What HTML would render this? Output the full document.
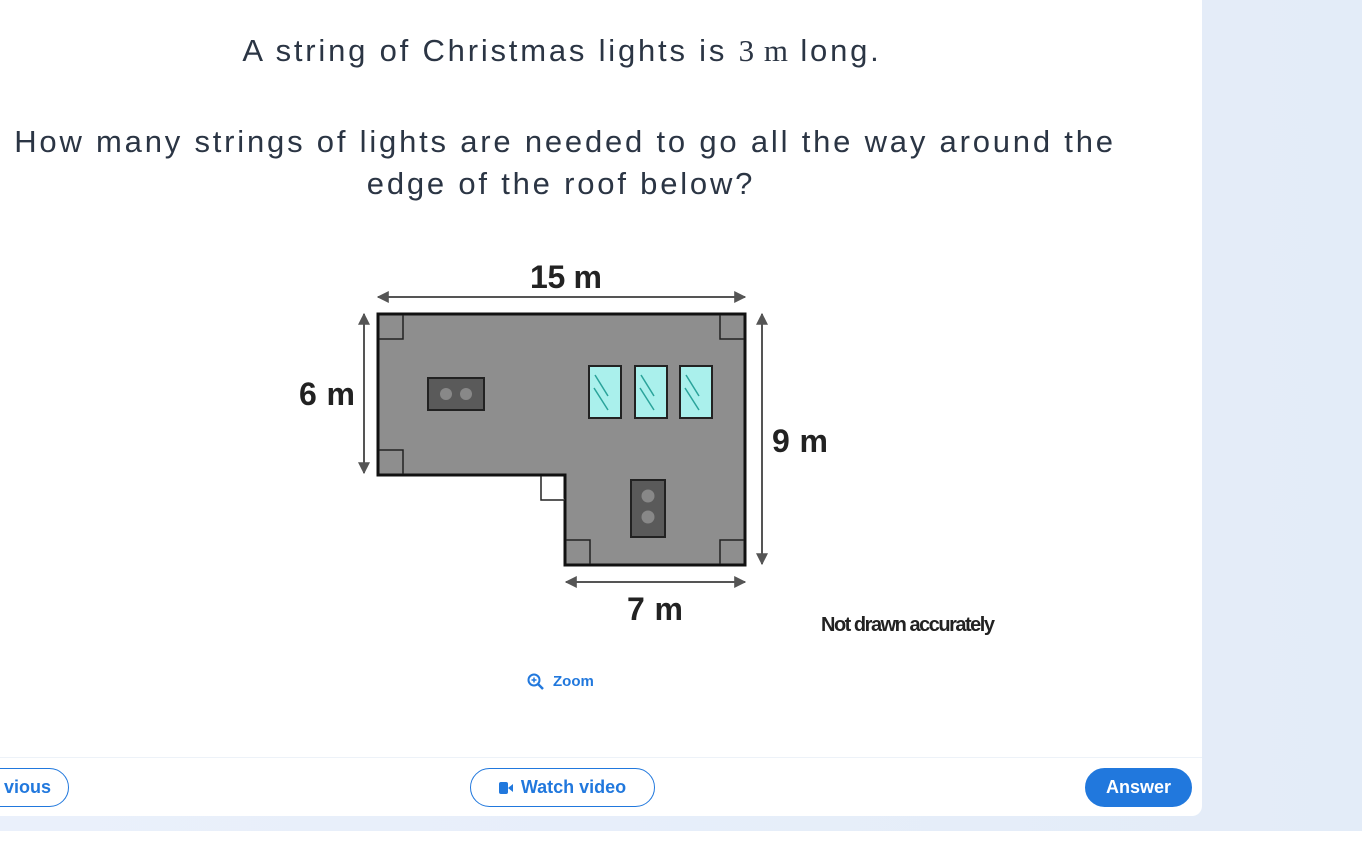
<!DOCTYPE html>
<html><head><meta charset="utf-8"><style>
body{margin:0;width:1362px;height:863px;background:#fff;position:relative;overflow:hidden;font-family:"Liberation Sans",sans-serif;color:#2b3544}
.bg{position:absolute;left:0;top:0;width:1362px;height:831px;background:linear-gradient(90deg,#eaf0fb,#e3ecf8)}
.card{position:absolute;left:-20px;top:-20px;width:1222px;height:836px;background:#fff;border-radius:0 0 10px 0}
.t{position:absolute;width:1202px;left:-40px;text-align:center;font-size:31px;letter-spacing:2.8px}
.btn{position:absolute;top:768px;height:37px;border:1.5px solid #2178dd;border-radius:20px;color:#2178dd;font-size:18px;font-weight:bold;line-height:37px;text-align:center;background:#fff}
</style></head><body>
<div class="bg"></div>
<div class="card"></div>
<div class="t" style="top:33px;left:-40px;width:1204px">A string of Christmas lights is <span style="font-family:'Liberation Serif',serif;letter-spacing:1px">3 m</span> long.</div>
<div class="t" style="top:124px;left:-40px;width:1210px">How many strings of lights are needed to go all the way around the</div>
<div class="t" style="top:166px;left:-40px">edge of the roof below?</div>
<svg style="position:absolute;left:0;top:0" width="1202" height="760">
<defs><marker id="a" viewBox="0 0 10 10" refX="9" refY="5" markerWidth="6" markerHeight="6" orient="auto-start-reverse"><path d="M0 0L10 5L0 10z" fill="#555"/></marker></defs>
<g stroke="#555" stroke-width="2" marker-start="url(#a)" marker-end="url(#a)">
<line x1="378" y1="297" x2="745" y2="297"/><line x1="364" y1="314" x2="364" y2="473"/><line x1="762" y1="314" x2="762" y2="564"/><line x1="566" y1="582" x2="745" y2="582"/></g>
<path d="M378 314H745V565H565V475H378Z" fill="#8e8e8e" stroke="#111" stroke-width="3"/>
<g fill="none" stroke="#222" stroke-width="1.5">
<path d="M379 339H403V315"/><path d="M720 315V339H744"/><path d="M379 450H403V474"/><path d="M566 540H590V564"/><path d="M720 564V540H744"/></g>
<path d="M541 476V500H565" fill="#fff" stroke="#222" stroke-width="1.5"/>
<rect x="428" y="378" width="56" height="32" fill="#5a5a5a" stroke="#222" stroke-width="2"/>
<circle cx="446" cy="394" r="6" fill="#888"/><circle cx="466" cy="394" r="6" fill="#888"/>
<rect x="631" y="480" width="34" height="57" fill="#5a5a5a" stroke="#222" stroke-width="2"/>
<circle cx="648" cy="496" r="6.5" fill="#888"/><circle cx="648" cy="517" r="6.5" fill="#888"/>
<g fill="#aaf0ec" stroke="#222" stroke-width="2"><rect x="589" y="366" width="32" height="52"/><rect x="635" y="366" width="32" height="52"/><rect x="680" y="366" width="32" height="52"/></g>
<g stroke="#2aa39a" stroke-width="1.5"><path d="M595 375L608 396M594 388L608 410M641 375L654 396M640 388L654 410M686 375L699 396M685 388L699 410"/></g>
<g font-family="'Liberation Sans Narrow','Liberation Sans',sans-serif" font-weight="bold" font-size="32" fill="#222" text-anchor="middle">
<text x="566" y="288" textLength="72">15 m</text><text x="327" y="405" textLength="56">6 m</text><text x="800" y="452" textLength="56">9 m</text><text x="655" y="620" textLength="56">7 m</text>
<text x="908" y="631" font-size="20" textLength="174">Not drawn accurately</text></g>
<circle cx="534" cy="680" r="5.5" fill="none" stroke="#2178dd" stroke-width="2"/><line x1="538" y1="684" x2="543" y2="689" stroke="#2178dd" stroke-width="2.5"/>
<path d="M531.5 680h5M534 677.5v5" stroke="#2178dd" stroke-width="1.5"/>
<text x="553" y="686" font-size="15" font-weight="bold" fill="#2178dd" font-family="'Liberation Sans',sans-serif">Zoom</text>
<line x1="0" y1="757.5" x2="1202" y2="757.5" stroke="#edf2f8"/>
</svg>
<div class="btn" style="left:-60px;width:127px;text-align:right;padding-right:0"><span style="margin-right:17px">vious</span></div>
<div class="btn" style="left:470px;width:183px"><span style="display:inline-block;width:9px;height:12px;background:#2178dd;border-radius:2px;vertical-align:-1px"></span><span style="display:inline-block;width:0;height:0;border-right:5px solid #2178dd;border-top:4px solid transparent;border-bottom:4px solid transparent;margin-right:8px;vertical-align:1px"></span>Watch video</div>
<div class="btn" style="left:1085px;width:105px;background:#2178dd;color:#fff">Answer</div>
</body></html>
